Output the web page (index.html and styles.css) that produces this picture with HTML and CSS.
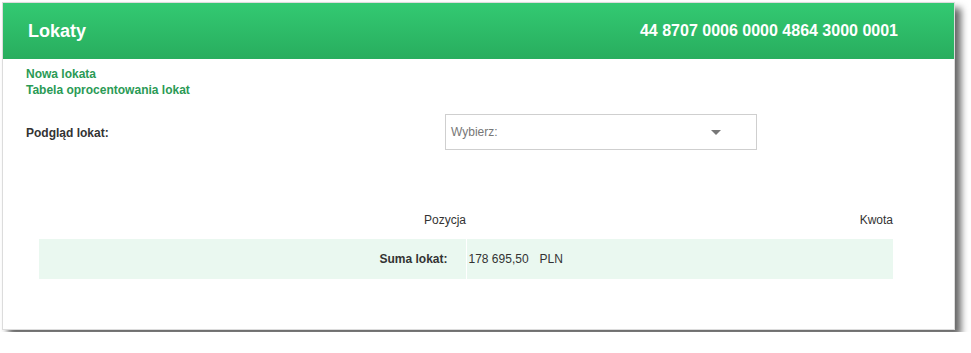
FILE: index.html
```html
<!DOCTYPE html>
<html lang="pl">
<head>
    <meta charset="UTF-8">
    <title>Lokaty</title>
    <link rel="stylesheet" href="styles.css">
</head>
<body>
    <div class="panel">
        <div class="panel__header">
            <h1 class="panel__title">Lokaty</h1>
            <span class="panel__account">44 8707 0006 0000 4864 3000 0001</span>
        </div>

        <div class="panel__body">
            <div class="links">
                <a href="#" class="links__item">Nowa lokata</a>
                <a href="#" class="links__item">Tabela oprocentowania lokat</a>
            </div>

            <div class="preview">
                <label class="preview__label">Podgląd lokat:</label>
                <div class="select">
                    <span class="select__value">Wybierz:</span>
                    <span class="select__arrow"></span>
                </div>
            </div>

            <table class="sum-table">
                <thead>
                    <tr>
                        <th class="sum-table__head">Pozycja</th>
                        <th class="sum-table__head">Kwota</th>
                    </tr>
                </thead>
                <tbody>
                    <tr class="sum-table__row">
                        <td class="sum-table__name">Suma lokat:</td>
                        <td class="sum-table__amount">178 695,50<span class="sum-table__currency">PLN</span></td>
                    </tr>
                </tbody>
            </table>
        </div>
    </div>
</body>
</html>
```

FILE: styles.css
```css
body{
    margin: 0;
    padding: 2px;
    background: #fff;
    font-family: "Liberation Sans", Arial, sans-serif;
    font-size: 12px;
    color: #333;
}

.panel{
    width: 951px;
    border: 1px solid #dcdcdc;
    background: #fff;
    box-shadow: 6px 6px 7px rgba(0, 0, 0, 0.6);
}

.panel__header{
    height: 56px;
    display: flex;
    align-items: center;
    justify-content: space-between;
    padding: 0 56px 0 25px;
    background: linear-gradient(to bottom, #33c972, #28ad5e);
    color: #fff;
}

.panel__title{
    margin: 0;
    font-size: 18px;
    font-weight: bold;
}

.panel__account{
    font-size: 16px;
    font-weight: bold;
}

.panel__body{
    padding: 7px 61px 50px 23px;
}

.links{
    display: flex;
    flex-direction: column;
    line-height: 16px;
}

.links__item{
    color: #2a9a55;
    font-weight: bold;
    text-decoration: none;
}

.preview{
    display: flex;
    align-items: center;
    margin-top: 16px;
}

.preview__label{
    width: 419px;
    font-weight: bold;
    padding-top: 2px;
}

.select{
    width: 270px;
    height: 34px;
    border: 1px solid #cfcfcf;
    display: flex;
    align-items: center;
    justify-content: space-between;
    padding: 0 35px 0 5px;
}

.select__value{
    color: #777;
}

.select__arrow{
    width: 0;
    height: 0;
    border-left: 5px solid transparent;
    border-right: 5px solid transparent;
    border-top: 5px solid #777;
}

.sum-table{
    width: 854px;
    margin: 59px 0 0 13px;
    border-collapse: collapse;
}

.sum-table__head{
    width: 50%;
    height: 29px;
    padding: 1px 0 0;
    text-align: right;
    font-weight: normal;
    vertical-align: top;
    line-height: 20px;
}

.sum-table__row{
    background: #eaf8f0;
    height: 40px;
}

.sum-table__name{
    padding: 0 18px 0 0;
    text-align: right;
    font-weight: bold;
}

.sum-table__amount{
    padding: 0 0 0 2px;
    border-left: 1px solid #fff;
}

.sum-table__currency{
    margin-left: 11px;
}
```
